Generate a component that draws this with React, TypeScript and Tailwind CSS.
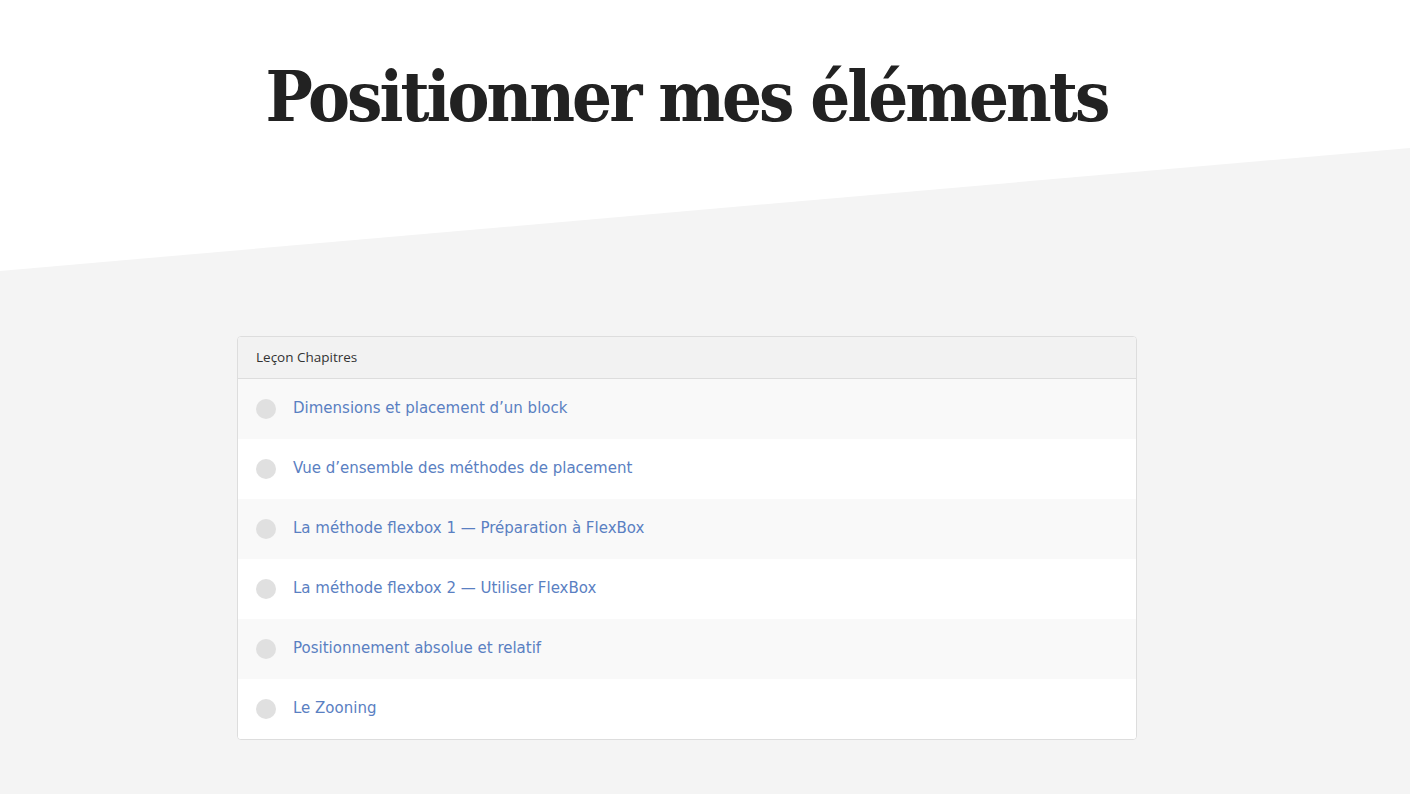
import React from 'react'

const chapters = [
  'Dimensions et placement d’un block',
  'Vue d’ensemble des méthodes de placement',
  'La méthode flexbox 1 — Préparation à FlexBox',
  'La méthode flexbox 2 — Utiliser FlexBox',
  'Positionnement absolue et relatif',
  'Le Zooning',
]

export default function App() {
  return (
    <div className="min-h-[794px] bg-white flex flex-col">
      {/* Title */}
      <header className="h-[148px] flex justify-center">
        <h1 className="mt-[47px] pr-[37px] text-[70px] leading-[100px] font-bold text-[#222222] font-['DejaVu_Serif_Condensed','DejaVu_Serif',serif] font-stretch-condensed tracking-[-3px]">
          Positionner mes éléments
        </h1>
      </header>

      {/* Grey slanted section */}
      <section className="flex-1 bg-[#f4f4f4] [clip-path:polygon(0_123px,100%_0,100%_100%,0_100%)] pt-[188px] pb-[54px]">
        <div className="w-[936px] mx-auto pr-[36px]">
          <div className="bg-white border border-[#dddddd] rounded-[4px] overflow-hidden">
            <div className="h-[42px] flex items-center px-[18px] bg-[#f2f2f2] border-b border-[#dddddd] text-[13.5px] text-[#333333] font-['Open_Sans',sans-serif]">
              Leçon Chapitres
            </div>
            {chapters.map((title, i) => (
              <div
                key={title}
                className={`h-[60px] flex items-center gap-[17px] px-[18px] ${i % 2 === 0 ? 'bg-[#f9f9f9]' : 'bg-white'}`}
              >
                <span className="w-[20px] h-[20px] rounded-full bg-[#e0e0e0] shrink-0" />
                <a href="#" className="text-[15px] leading-[20px] pb-[2px] text-[#5a80c2] font-['DejaVu_Sans',Verdana,sans-serif]">
                  {title}
                </a>
              </div>
            ))}
          </div>
        </div>
      </section>
    </div>
  )
}
